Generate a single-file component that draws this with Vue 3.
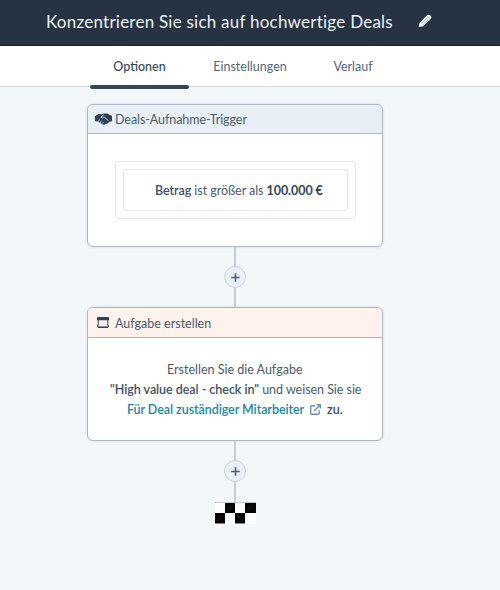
<script setup>
const tabs = [
  { label: 'Optionen', cls: 'options', active: true },
  { label: 'Einstellungen', cls: 'settings', active: false },
  { label: 'Verlauf', cls: 'history', active: false },
]
</script>

<template>
  <div class="page">
    <header class="topbar">
      <h1>Konzentrieren Sie sich auf hochwertige Deals</h1>
      <svg class="pencil" width="14" height="14" viewBox="0 0 14 14">
        <path d="M.6 13.2 L1.5 8.9 L8.8 1.6 Q10.7 -.2 12.4 1.4 Q14.2 3.1 12.5 5 L5.2 12.3 Z" fill="#f4fafa" />
        <path d="M3.5 9.4 L9.3 3.6 M5 10.8 L10.8 5" stroke="#8fb3b0" stroke-width=".8" />
        <path d="M9.2 2.2 L11.8 4.8" stroke="#7d9098" stroke-width=".6" />
      </svg>
    </header>

    <nav class="tabs">
      <a v-for="tab in tabs" :key="tab.label" :class="['tab', tab.cls, { active: tab.active }]"><span>{{ tab.label }}</span></a>
    </nav>

    <main class="canvas">
      <section class="card trigger">
        <div class="card-head">
          <svg class="hands" width="17" height="12" viewBox="0 0 17 12">
            <path d="M0 3.2 L3.5 1 L6.5 1.3 L8.3 .5 L12.4 .4 L14 1.6 L17 3 V8.3 L14.5 8.8 L12.2 10.7 L10.7 11 L9.5 11.7 L7.5 11.5 L3.3 8.5 L0 8.2 Z" fill="#2d4257" />
            <path d="M8.8 1.8 L5.8 4.4 Q7.2 5.5 9.1 3.9 L13.4 7.7 M3.2 8 L5 6.6 M5 9.5 L6.8 7.9 M7 10.8 L8.5 9.2" fill="none" stroke="#e3eaf2" stroke-width=".8" />
          </svg>
          <span class="head-text">Deals-Aufnahme-Trigger</span>
        </div>
        <div class="card-body">
          <div class="group">
            <div class="condition"><p><b class="medium">Betrag</b> ist größer als <b>100.000 €</b></p></div>
          </div>
        </div>
      </section>

      <div class="connector first">
        <button class="add" aria-label="+"><svg width="9" height="9" viewBox="0 0 9 9"><path d="M4.5 .3 V8.7 M.3 4.5 H8.7" stroke="#426085" stroke-width="1.6" /></svg></button>
      </div>

      <section class="card task">
        <div class="card-head">
          <svg class="window" width="12" height="11" viewBox="0 0 12 11">
            <path d="M1 0 H11 Q12 0 12 1 V3.2 H0 V1 Q0 0 1 0 Z" fill="#2d4257" />
            <path d="M1.2 3 V6.8 L.5 8.7 V9.6 Q.5 10.4 1.3 10.4 H10.7 Q11.5 10.4 11.5 9.6 V8.7 L10.8 6.8 V3" fill="none" stroke="#2d4257" stroke-width="1" />
            <path d="M1 10.2 H11" stroke="#2d4257" stroke-width="1.2" />
            <path d="M1 8.2 H2.6 M9.4 8.2 H11" stroke="#2d4257" stroke-width=".6" />
          </svg>
          <span class="head-text">Aufgabe erstellen</span>
        </div>
        <div class="card-body">
          <p class="line-a">Erstellen Sie die Aufgabe</p>
          <p class="line-b"><b class="medium">"High value deal - check in"</b> und weisen Sie sie</p>
          <p class="line-c">
            <a>Für Deal zuständiger Mitarbeiter</a>
            <svg class="external" width="11" height="11" viewBox="0 0 11 11">
              <path d="M5 1.8 H1.7 Q.7 1.8 .7 2.8 V9.3 Q.7 10.3 1.7 10.3 H8.2 Q9.2 10.3 9.2 9.3 V6.2 M4 7 L9.6 1.4 M6.5 .7 H10.3 V4.5" fill="none" stroke="#7091b5" stroke-width="1.4" />
            </svg>
            <span class="medium">zu.</span>
          </p>
        </div>
      </section>

      <div class="connector second">
        <button class="add" aria-label="+"><svg width="9" height="9" viewBox="0 0 9 9"><path d="M4.5 .3 V8.7 M.3 4.5 H8.7" stroke="#426085" stroke-width="1.6" /></svg></button>
      </div>

      <svg class="flag" width="41" height="22" viewBox="0 0 41 22">
        <rect width="41" height="22" fill="#fff" />
        <path d="M10 1 H20 V11 H10 Z M30 1 H41 V11 H30 Z M0 11 H10 V21.5 H0 Z M20 11 H30 V21.5 H20 Z" fill="#050505" />
        <path d="M12 9 L18 3 M32 9 L38 3 M2 19 L8 13 M22 13 L28 19" stroke="#2b2b2b" stroke-width=".7" />
        <path d="M0 .5 H41" stroke="#c3ccd6" />
      </svg>
    </main>
  </div>
</template>

<style>
body { margin: 0; background: #f3f7fa; }
</style>

<style scoped>
* { box-sizing: border-box; }
.page { height: 590px; overflow: hidden; background: #f3f7fa; font-family: Lato, "Liberation Sans", sans-serif; font-size: 12.5px; color: #4b5c6e; }
h1, p { margin: 0; white-space: nowrap; }
svg { display: block; flex: none; }
.topbar { height: 46px; background: #263342; border-bottom: 1px solid #1b2735; display: flex; align-items: flex-start; padding-left: 46px; }
h1 { width: 372px; line-height: 24px; padding-top: 10px; font-size: 17px; font-weight: 400; letter-spacing: .24px; color: #eef2f5; }
.pencil { margin-top: 14px; }
.tabs { height: 41px; background: #fff; border-bottom: 1px solid #cfd9e3; display: flex; padding-left: 90px; }
.tab { height: 43px; line-height: 42px; text-align: center; color: #53677a; flex: none; }
.tab.active { color: #33475b; font-weight: 500; display: flex; flex-direction: column; }
.tab.active::after { content: ""; height: 4px; margin-top: -3px; background: #33475b; border-radius: 2px; }
.options { width: 99px; }
.settings { width: 122px; }
.history { width: 84px; }
.canvas { width: 296px; margin-left: 87px; padding-top: 17px; display: flex; flex-direction: column; align-items: center; }
.card { width: 296px; background: #fff; border: 1px solid #a9b9cb; border-radius: 6px; box-shadow: 0 0 3px #cbd6e2; flex: none; overflow: hidden; }
.trigger { height: 143px; }
.task { height: 134px; }
.card-head { height: 30px; display: flex; align-items: center; border-bottom: 1px solid #a9b9cb; background: #e9eff6; }
.trigger .card-head { height: 29px; letter-spacing: -.07px; }
.task .card-head { background: #fff1ec; }
.task .head-text { padding-top: 2px; }
.hands { margin-left: 7px; margin-right: 3px; }
.window { margin-left: 9px; margin-right: 6px; }
.trigger .card-body { padding: 27px 0 0 27px; }
.group { width: 241px; height: 58px; border: 1px solid #e1e7ed; border-radius: 3px; padding: 7px; }
.condition { width: 225px; height: 42px; border: 1px solid #dde4ec; border-radius: 3px; padding-left: 31px; line-height: 42px; letter-spacing: -.06px; }
.medium { font-weight: 600; color: #3d5064; }
b { color: #33475b; }
.task .card-body { padding-top: 22px; line-height: 20px; }
.line-a { padding-left: 79px; }
.line-b { padding-left: 22px; letter-spacing: -.04px; }
.line-c { padding-left: 39px; display: flex; align-items: center; }
.line-c a { color: #1689a0; font-weight: 600; width: 183px; letter-spacing: -.06px; }
.external { margin-right: 6px; margin-bottom: 2px; }
.connector { background: linear-gradient(#c3ced9, #c3ced9) center / 2px 100% no-repeat; display: flex; justify-content: center; flex: none; }
.first { height: 60px; width: 22px; padding-top: 19px; }
.second { height: 61px; width: 22px; padding-top: 19px; }
.add { width: 22px; height: 22px; flex: none; border: 1px solid #c7d3df; border-radius: 50%; background: #eaf0f6; padding: 0; display: flex; align-items: center; justify-content: center; }
.flag { flex: none; }
</style>
